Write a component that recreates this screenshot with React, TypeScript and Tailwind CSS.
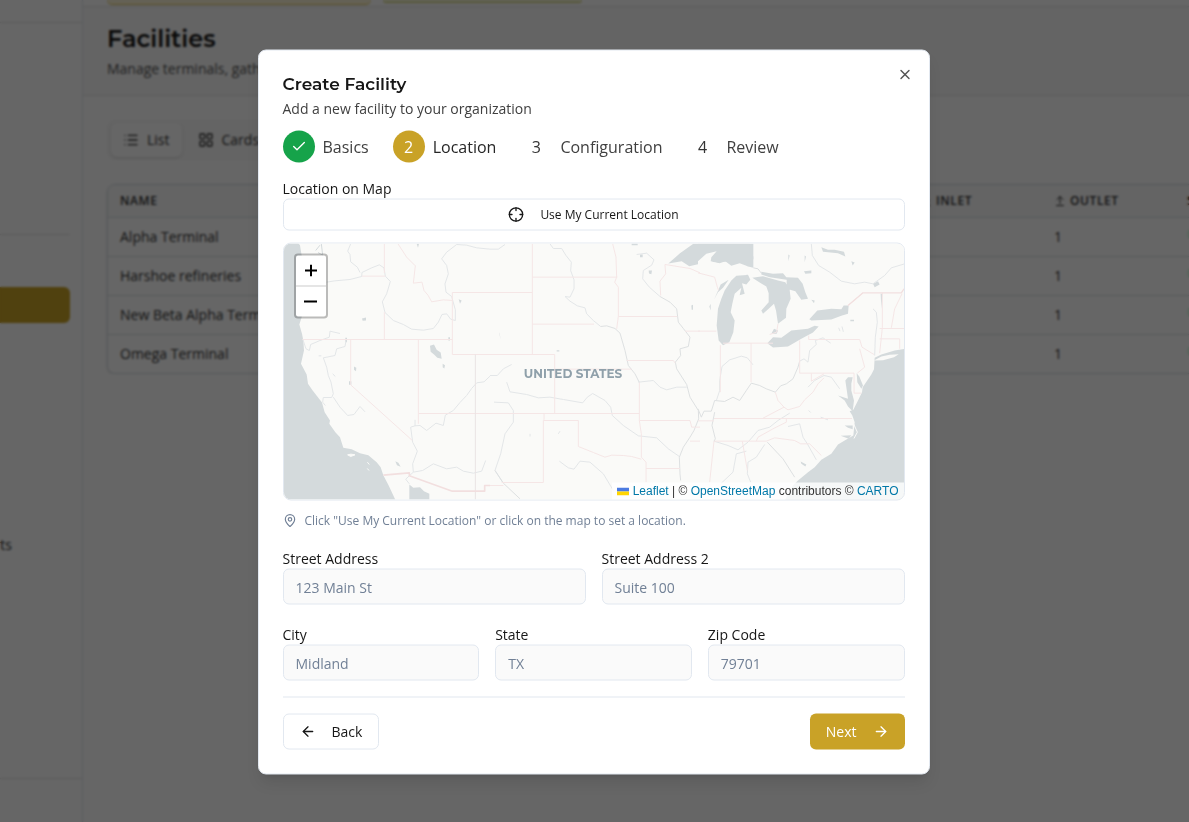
import { ArrowLeft, ArrowRight, ArrowDownToLine, ArrowUpFromLine, Check, Crosshair, LayoutGrid, List, MapPin, X } from "lucide-react";

const facilities = ["Alpha Terminal", "Harshoe refineries", "New Beta Alpha Terminal", "Omega Terminal"];

const steps = [
  { label: "Basics", state: "done" },
  { label: "Location", state: "current" },
  { label: "Configuration", state: "todo" },
  { label: "Review", state: "todo" },
];

const circleStyles: Record<string, string> = {
  done: "bg-[#16a34a] text-white",
  current: "bg-[#c9a227] text-white font-medium",
  todo: "text-[#333]",
};

function Sidebar() {
  return (
    <aside className="flex w-[83px] shrink-0 flex-col overflow-hidden border-r border-[#e2e8f0]">
      <div className="h-[23px] border-b border-[#e5e5e5]" />
      <div className="mr-3 h-[212px] border-b border-[#e5e5e5]" />
      <div className="mt-[52px] mr-3 h-9 rounded-r-md bg-[#c9a227]" />
      <div className="mt-[212px] flex justify-end pr-[70px] text-sm text-[#333]">
        <span className="whitespace-nowrap">Accounts</span>
      </div>
      <div className="mt-auto h-11 border-t border-[#e5e5e5]" />
    </aside>
  );
}

function FacilitiesPage() {
  return (
    <main className="min-w-0 flex-1">
      <div className="flex h-[7px] items-start gap-3 border-b border-[#e5e5e5] pl-6">
        <div className="h-[5px] w-[264px] rounded-b-lg border-b border-[#e0c760] bg-[#fbf3d4]" />
        <div className="h-[3px] w-[199px] rounded-b-lg border-b border-[#c9c760] bg-[#f3f5d4]" />
      </div>
      <header className="h-[89px] border-b border-[#e5e5e5] bg-[#fafafa] px-6 pt-4">
        <h1 className="font-['Montserrat','Inter',sans-serif] text-2xl font-semibold leading-8 text-[#171717]">Facilities</h1>
        <p className="mt-1 text-sm text-[#525252]">Manage terminals, gathering points and refineries</p>
      </header>
      <div className="overflow-hidden pt-6 pl-6">
        <div className="flex w-fit rounded-lg bg-[#f9f9f9] px-1 py-[3px] text-sm text-[#333]">
          <button className="flex h-[34px] items-center gap-2 rounded-md bg-white px-3 shadow-sm">
            <List size={16} /> List
          </button>
          <button className="flex h-[34px] items-center gap-2 px-4">
            <LayoutGrid size={16} /> Cards
          </button>
        </div>
        <div className="mt-6 w-[1240px] overflow-hidden rounded-lg border border-[#d5dde3] shadow-sm">
          <table className="w-full table-fixed text-left text-sm text-[#333]">
            <thead>
              <tr className="h-8 bg-[#f9f9f9] text-xs tracking-wider">
                <th className="w-[800px] pl-3 font-semibold">NAME</th>
                <th className="w-[134px] pl-3 font-semibold">
                  <span className="flex items-center gap-1"><ArrowDownToLine size={12} /> INLET</span>
                </th>
                <th className="w-[133px] pl-3 font-semibold">
                  <span className="flex items-center gap-1"><ArrowUpFromLine size={12} /> OUTLET</span>
                </th>
                <th className="pl-3 font-semibold">STATUS</th>
              </tr>
            </thead>
            <tbody>
              {facilities.map((name) => (
                <tr key={name} className="h-[39px] border-t border-[#d9e2e4]">
                  <td className="pl-3">{name}</td>
                  <td className="pl-3">1</td>
                  <td className="pl-3">1</td>
                  <td className="pl-3">
                    <span className="inline-block h-4 w-12 rounded-full bg-[#dcfce7]" />
                  </td>
                </tr>
              ))}
            </tbody>
          </table>
        </div>
      </div>
    </main>
  );
}

function BaseMap() {
  return (
    <svg viewBox="284 243 620 256" preserveAspectRatio="xMidYMid slice" className="block h-full w-full" role="img" aria-label="Map of the United States">
      <rect x="0" y="0" width="1200" height="900" fill="#fafaf8" />

      {/* West */}
      <g transform="translate(280 240) scale(.33333)" fill="none" strokeWidth="3" strokeLinejoin="round">
        <path fill="#d4dadc" d="M0 0H48L60 14L65 45V230L58 252L66 280L70 300L72 330L63 370L80 402L84 430L98 450L112 468L126 486L134 515L150 540L148 550L166 575L180 590L190 622L215 626L240 638L265 644L290 665L302 680L310 704L326 735L347 780H0Z" />
        <path fill="#d4dadc" d="M388 732L400 742L420 740L432 752L448 760V780H388Z" />
        <path fill="#d4dadc" d="M450 316L462 312L470 328L482 336L485 355L472 352L462 342L452 334ZM222 378L229 382L228 392L222 388ZM207 422H214V433H207ZM488 370L495 374L493 384L488 380ZM536 176L545 180L540 190ZM246 234L258 231V240L248 241ZM196 292H201V305H196ZM346 662L355 667L362 679L351 674ZM410 10H417L414 22ZM505 290H510V300H505Z" />
        <path stroke="#fafaf8" fill="#fafaf8" d="M203 643L213 641L225 643L212 648ZM262 665L268 672M262 684L267 690" />
        <path stroke="#d4dadc" d="M107 30L120 14M124 10L128 44L114 36" />
        <path stroke="#e3e6e8" d="M140 125L165 121L210 117L245 108L246 96L275 82L298 73L312 82L316 107L331 123L320 160L307 184L315 216L340 240L370 252L395 266L430 269L460 264L475 245L486 222L500 220L512 236L526 240V208L515 168L498 155L495 130L505 100L500 75L485 55L500 35L530 12L560 14L590 22L630 26" />
        <path stroke="#e3e6e8" d="M212 10L203 32L210 42L212 64L232 80L240 96M68 295L78 325L88 330L92 312L120 300L148 290L150 272L180 279M198 300L195 318L170 325L165 345L130 352L140 380L145 405L153 425L160 460L155 471H130L128 485L136 495M160 470L180 500L203 525L222 522L240 498L255 514M116 346H124M158 400L166 408" />
        <path stroke="#e3e6e8" d="M630 407L612 424L590 427L575 444L560 465L540 486L520 510L496 524L490 555L468 548L440 570L420 555L405 556L392 560L398 605L412 632L398 670L400 695L428 690L460 670L500 685L530 680L550 692L580 698L605 692L617 660M400 695L377 716L388 730M405 538V556" />
        <path stroke="#f5e6e6" d="M313 10V98M246 107H316M313 215V297M68 297H517M212 297V433L397 600M415 297V550M415 519H630M517 180V342H630M517 156H630M517 156V180L490 178L455 184L444 164L432 150L426 125L400 128L406 76L380 50L354 10" />
        <path stroke="#e9e4e4" d="M586 342V780" />
        <path stroke="#f2dfdf" strokeWidth="5" d="M310 704L388 697V706L517 752H614V735H630" />
      </g>

      {/* Midwest and plains */}
      <g transform="translate(490 240) scale(.33333)" fill="none" strokeWidth="3" strokeLinejoin="round">
        <path fill="#d4dadc" d="M535 69L570 38L610 10H790V56L770 60L700 64L665 60L630 70L598 77L575 62ZM476 90L486 90L484 101L477 99ZM450 42H458V50H450ZM425 8H443V14H425ZM27 275L32 298L29 280ZM604 195L609 193V208H605ZM200 329H208V333H200Z" />
        <path stroke="#e3e6e8" d="M0 26H25L45 12M180 10L190 24H215L228 45L244 65L242 90L252 118V145L240 170L225 168L240 182L262 196L285 202L290 220L310 240L332 258M445 425L490 420L510 440L530 448L560 440L590 440M440 42L470 38L492 58L485 74L460 90L458 115L478 140L510 168M50 425L60 454L110 462L145 472L180 470L220 477L278 487L292 470L308 459L345 480L362 500L367 525L400 555L445 586L500 592L535 625L568 648M12 485L55 487L70 510V545L45 580L32 640L15 690L40 728M208 662L235 682L252 686L270 662L300 665L340 700L370 750M0 405H22L40 385L65 372M120 580V588M205 580L210 572" />
        <path stroke="#dde0e1" d="M332 258L350 256L375 264L390 278L405 330L415 375L435 400L448 426M510 168L540 185L560 205L565 245L580 264L600 290L595 318L570 325L572 345L556 365L560 385L590 432L600 470L625 510L626 535L612 570L600 590L580 620L568 650L570 700L572 720M15 690L40 728L90 775" />
        <path stroke="#f5e6e6" d="M127 10V342M127 110H382M0 156H127M127 251H312M0 342H194V519M0 519H448M194 386H425M162 519V538M368 10L378 50L380 110L374 125L385 140V228L380 265M385 228H562M410 360H550L556 368M448 426V540L454 580V650L468 665V725M448 540H600L605 560H630M160 540H265V618L310 636L345 650L365 644L400 645L425 648L454 656M160 540V726H35M468 684H570M525 72L527 100L510 122L512 165M525 72L600 84L630 97M585 272H630M600 602H630M0 735H40" />
      </g>

      {/* East */}
      <g transform="translate(698 240) scale(.33333)" fill="none" strokeWidth="3" strokeLinejoin="round">
        <path fill="#d4dadc" d="M0 10H155L154 36L166 48V82L150 78L125 68L100 76L82 62L65 68L40 64L0 62Z" />
        <path fill="#fafaf8" d="M0 62L25 40L56 32L40 50L38 62L65 70L50 82L0 80Z" />
        <path fill="#d4dadc" d="M150 103L157 118L145 132L132 128L140 160L125 164L130 142L110 160L103 190L98 215L110 240L106 275L94 305L75 314L62 300L56 255L60 205L70 175L80 150L100 120L115 106ZM92 118L75 142L60 155L48 178L68 132Z" />
        <path fill="#d4dadc" d="M163 112L195 107L240 120L262 125L275 148L278 175L265 205L264 232L240 250L234 210L228 190L212 205L195 220L190 210L212 185V158L205 138L185 126ZM190 94L225 100L255 98L265 110L300 112L314 130L322 155L330 175L310 178L292 152L266 145V118L215 110L190 102ZM340 178L350 180L348 188Z" />
        <path fill="#d4dadc" d="M334 236L358 210L400 205L430 206L437 195H452L450 220L430 226L400 237L340 240ZM228 265L240 270L236 280H220ZM208 308L225 290L250 292L280 270L330 265L350 256L362 258L345 276L310 295L270 318L225 321Z" />
        <path fill="#d4dadc" d="M620 325L590 330L550 342L530 352L528 386L520 402L494 440L492 455L480 480L466 508L455 512L463 525L470 545L466 585L440 600L420 612L400 640L370 658L350 680L330 695L300 720L285 735L260 780H620Z" />
        <path fill="#fafaf8" d="M528 360L550 348L575 343L602 341L588 350L555 359Z" />
        <path stroke="#fafaf8" d="M466 548L478 575L468 594" />
        <path fill="#d4dadc" d="M442 420L450 410H464L460 430V450L468 480L464 512L450 498L440 480L420 465L450 475L445 440ZM476 398L484 408L495 435L490 445L478 425ZM440 555H464V566L450 562ZM428 586L460 584L452 595ZM370 20L390 28H410L438 34L442 48L420 38L375 34ZM318 92L340 90V98L322 100ZM460 62L470 66L464 75ZM271 42V62L275 45ZM320 45V65L324 48ZM34 198L38 190V210ZM548 160H553L550 205ZM525 130L540 122L545 132L530 140ZM308 663L325 672L322 678L310 670ZM275 640L282 642ZM457 238H468V242H457Z" />
        <path stroke="#e3e6e8" d="M332 510L338 516M368 530L390 538M340 10L343 45L362 75L395 95L430 122L470 130L500 125L525 130L560 105L580 82L620 70M525 205L535 215L538 245L532 290L530 345M305 362L318 355L330 365L335 330L355 312L352 300L375 292L398 308M55 480L65 450V420L72 378L95 358L130 347L148 352L165 373M48 602L90 615L120 628L150 605L180 570L215 560L240 540L275 518M270 558L305 550L315 590L328 610L355 658M200 612L175 650L150 665L148 700L158 725M145 632L115 640L105 695L70 728M330 440L350 420L378 405L400 410L425 445M422 262L426 272M432 258L436 274" />
        <path stroke="#dde0e1" d="M0 505L10 530L18 512L40 512L50 480L80 483L105 470L125 480L145 450L160 428L185 435L205 445L232 455L248 436L265 430L285 415L300 380L305 362M50 515L42 555L52 595L48 602M166 82L180 85L190 98M208 605L255 655L290 710" />
        <path stroke="#f5e6e6" d="M0 97L50 110L58 140L62 150M0 272H55M75 308H225M67 314V455M159 308V425M305 300V398H468V458H490M332 285V297H485L492 320L528 342M485 325L500 380L478 398M340 398V422L378 400M450 195L495 157M553 157V262L545 338M545 264H620M545 295H605V325M612 160L590 205L580 262M0 541H48M48 534H462M48 602H205L230 592L290 600L308 610H335L370 645M48 602L35 725M133 602L148 690M232 455L240 480L258 500L270 508L305 498L320 478L345 455L360 430L378 412M258 500L195 533M175 602L180 590L225 565L265 545V533M240 250L236 275L215 282" />
        <path stroke="#f2dfdf" strokeWidth="4" d="M450 195L495 157H610L618 145" />
      </g>

      <text x="573" y="377" textAnchor="middle" className="fill-[#8fa0aa] font-['Montserrat','Inter',sans-serif] text-[12px] font-bold">
        UNITED STATES
      </text>
    </svg>
  );
}

function MapView() {
  return (
    <div className="relative mt-3 h-[258px] overflow-hidden rounded-lg border border-[#e2e8f0]">
      <BaseMap />
      <div className="absolute top-[10px] left-[10px] flex flex-col overflow-hidden rounded-sm border-2 border-black/25 bg-white bg-clip-padding text-black">
        <button aria-label="Zoom in" className="grid h-[31px] w-[30px] place-items-center border-b border-[#ccc]">
          <svg width="12" height="12" stroke="currentColor" strokeWidth="2"><path d="M6 0V12M0 6H12" /></svg>
        </button>
        <button aria-label="Zoom out" className="grid h-[30px] w-[30px] place-items-center">
          <svg width="13" height="12" stroke="currentColor" strokeWidth="2"><path d="M0 6H13" /></svg>
        </button>
      </div>
      <div className="absolute right-0 bottom-0 flex items-center gap-1 bg-white/80 px-[5px] font-['Liberation_Sans',sans-serif] text-xs leading-[17px] text-[#333]">
        <svg width="12" height="8" aria-hidden="true">
          <path fill="#4c7be1" d="M0 0h12v4H0z" />
          <path fill="#ffd500" d="M0 4h12v4H0z" />
        </svg>
        <span>
          <a href="#leaflet" className="text-[#0078a8]">Leaflet</a> | © <a href="#osm" className="text-[#0078a8]">OpenStreetMap</a> contributors © <a href="#carto" className="text-[#0078a8]">CARTO</a>
        </span>
      </div>
    </div>
  );
}

function Field({ id, label, placeholder }: { id: string; label: string; placeholder: string }) {
  return (
    <div className="min-w-0 flex-1">
      <label htmlFor={id} className="block text-sm text-[#171717]">{label}</label>
      <input
        id={id}
        placeholder={placeholder}
        className="block h-9 w-full rounded-md border border-[#e2e8f0] bg-[#fafafa] px-3 text-sm placeholder:text-[#718096]"
      />
    </div>
  );
}

function CreateFacilityDialog() {
  return (
    <div
      role="dialog"
      aria-labelledby="dialog-title"
      className="fixed top-1/2 left-1/2 mt-px -ml-px w-full max-w-2xl -translate-x-1/2 -translate-y-1/2 rounded-lg border border-[#e2e8f0] bg-white p-6 shadow-lg"
    >
      <button aria-label="Close" className="absolute top-4 right-4 text-[#525252]">
        <X size={16} />
      </button>
      <h2 id="dialog-title" className="font-['Montserrat','Inter',sans-serif] text-[17px] leading-[18px] font-semibold text-[#171717]">Create Facility</h2>
      <p className="mt-[6px] text-sm text-[#404040]">Add a new facility to your organization</p>

      <ol className="mt-3 flex gap-6">
        {steps.map((step, i) => (
          <li key={step.label} className="flex items-center gap-2">
            <span className={`grid size-8 place-items-center rounded-full ${circleStyles[step.state]}`}>
              {step.state === "done" ? <Check size={16} /> : i + 1}
            </span>
            <span className={step.state === "current" ? "text-[#262626]" : "text-[#404040]"}>{step.label}</span>
          </li>
        ))}
      </ol>

      <p className="mt-4 text-sm text-[#171717]">Location on Map</p>
      <button className="flex h-8 w-full items-center justify-center gap-4 rounded-md border border-[#e2e8f0] text-xs text-[#171717]">
        <Crosshair size={16} />
        Use My Current Location
      </button>
      <MapView />
      <p className="mt-3 flex items-center gap-2 text-xs text-[#718096]">
        <MapPin size={14} />
        Click "Use My Current Location" or click on the map to set a location.
      </p>

      <form className="mt-5 flex flex-col gap-5">
        <div className="flex gap-4">
          <Field id="street" label="Street Address" placeholder="123 Main St" />
          <Field id="street2" label="Street Address 2" placeholder="Suite 100" />
        </div>
        <div className="flex gap-4">
          <Field id="city" label="City" placeholder="Midland" />
          <Field id="state" label="State" placeholder="TX" />
          <Field id="zip" label="Zip Code" placeholder="79701" />
        </div>
      </form>

      <div className="mt-4 flex justify-between border-t border-[#e2e8f0] pt-4">
        <button className="flex h-9 items-center gap-4 rounded-md border border-[#e2e8f0] px-4 text-sm text-[#171717]">
          <ArrowLeft size={16} />
          Back
        </button>
        <button className="flex h-9 items-center gap-4 rounded-md bg-[#c9a227] px-4 text-sm font-medium text-white">
          Next
          <ArrowRight size={16} />
        </button>
      </div>
    </div>
  );
}

export default function App() {
  return (
    <div className="relative flex h-screen overflow-hidden bg-white font-['Open_Sans',sans-serif]">
      <Sidebar />
      <FacilitiesPage />
      <div className="fixed inset-0 bg-black/60 backdrop-blur-[1px]" />
      <CreateFacilityDialog />
    </div>
  );
}
